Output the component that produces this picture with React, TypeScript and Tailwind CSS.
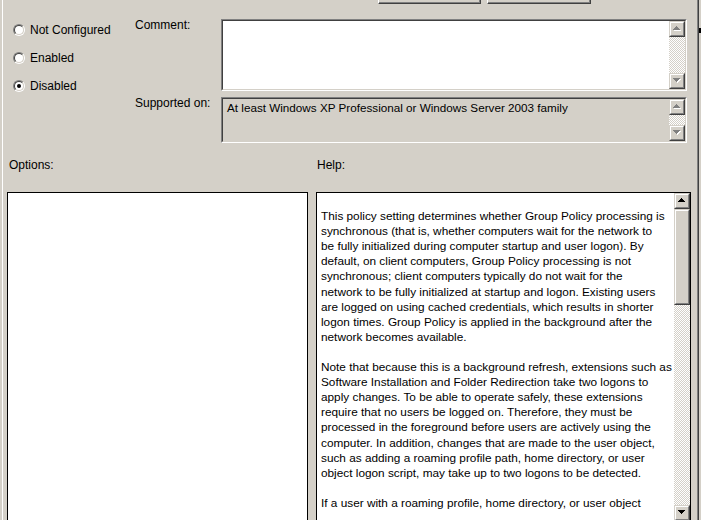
import React from "react";

const Arrow = ({ dir, disabled }: { dir: "up" | "down"; disabled?: boolean }) => {
  const rows = dir === "up" ? [0, 1, 2, 3] : [3, 2, 1, 0];
  const rects = (dx: number, dy: number, fill: string) =>
    rows.map((w, i) => (
      <rect key={fill + i} x={3 - w + dx} y={i + dy} width={2 * w + 1} height={1} fill={fill} />
    ));
  return (
    <svg width="9" height="6" viewBox="0 0 9 6" shapeRendering="crispEdges">
      {disabled ? (
        <>
          {rects(1, 1, "#ffffff")}
          {rects(0, 0, "#808080")}
        </>
      ) : (
        rects(0, 0, "#000000")
      )}
    </svg>
  );
};

const Raised = ({ className = "", children }: { className?: string; children?: React.ReactNode }) => (
  <div className={`shrink-0 border border-t-[#d4d0c8] border-l-[#d4d0c8] border-r-[#404040] border-b-[#404040] ${className}`}>
    <div className="w-full h-full border border-t-white border-l-white border-r-[#808080] border-b-[#808080] bg-[#d4d0c8] flex items-center justify-center">
      {children}
    </div>
  </div>
);

const Track = ({ className = "" }: { className?: string }) => (
  <div
    className={`bg-[image:repeating-conic-gradient(#ffffff_0%_25%,#d4d0c8_0%_50%)] bg-size-[2px_2px] ${className}`}
  />
);

const Sunken = ({ className = "", inner = "", children }: { className?: string; inner?: string; children?: React.ReactNode }) => (
  <div className={`shrink-0 border border-t-[#808080] border-l-[#808080] border-r-white border-b-white ${className}`}>
    <div className={`w-full h-full border border-t-[#404040] border-l-[#404040] border-r-[#d4d0c8] border-b-[#d4d0c8] flex ${inner}`}>
      {children}
    </div>
  </div>
);

const Radio = ({ checked, label }: { checked?: boolean; label: string }) => (
  <div className="flex items-center h-[14px] shrink-0">
    <span className="w-[12px] h-[12px] rounded-full border border-t-[#808080] border-l-[#808080] border-r-white border-b-white">
      <span className="w-full h-full rounded-full border border-t-[#404040] border-l-[#404040] border-r-[#d4d0c8] border-b-[#d4d0c8] bg-white flex items-center justify-center">
        {checked && <span className="w-[4px] h-[4px] rounded-full bg-black" />}
      </span>
    </span>
    <span className="ml-[5px] whitespace-nowrap">{label}</span>
  </div>
);

const helpLines = [
  "",
  "This policy setting determines whether Group Policy processing is",
  "synchronous (that is, whether computers wait for the network to",
  "be fully initialized during computer startup and user logon). By",
  "default, on client computers, Group Policy processing is not",
  "synchronous; client computers typically do not wait for the",
  "network to be fully initialized at startup and logon. Existing users",
  "are logged on using cached credentials, which results in shorter",
  "logon times. Group Policy is applied in the background after the",
  "network becomes available.",
  "",
  "Note that because this is a background refresh, extensions such as",
  "Software Installation and Folder Redirection take two logons to",
  "apply changes. To be able to operate safely, these extensions",
  "require that no users be logged on. Therefore, they must be",
  "processed in the foreground before users are actively using the",
  "computer. In addition, changes that are made to the user object,",
  "such as adding a roaming profile path, home directory, or user",
  "object logon script, may take up to two logons to be detected.",
  "",
  "If a user with a roaming profile, home directory, or user object",
];

export default function App() {
  return (
    <div
      className="w-[701px] h-[520px] overflow-hidden bg-[#d4d0c8] flex text-[12px] leading-[14px] text-black"
      style={{ fontFamily: '"Liberation Sans", Arial, sans-serif' }}
    >
      <div className="w-[2px] shrink-0" />
      <div className="w-px shrink-0 bg-white" />
      <div className="w-[694px] shrink-0 flex flex-col">
        {/* top buttons (clipped) */}
        <div className="h-[4px] shrink-0 flex items-end overflow-hidden">
          <div className="ml-[375px] w-[103px] h-[23px] shrink-0 border-r border-b border-[#404040] border-l border-l-white">
            <div className="w-full h-full border-b border-r border-[#808080]" />
          </div>
          <div className="ml-[6px] w-[104px] h-[23px] shrink-0 border-r border-b border-[#404040] border-l border-l-white">
            <div className="w-full h-full border-b border-r border-[#808080]" />
          </div>
        </div>

        <div className="flex shrink-0">
          <div className="w-[132px] shrink-0 pl-[10px] pt-[19px] flex flex-col gap-[14px]">
            <Radio label="Not Configured" />
            <Radio label="Enabled" />
            <Radio checked label="Disabled" />
          </div>
          <div className="w-[86px] shrink-0 flex flex-col">
            <div className="mt-[14px]">Comment:</div>
            <div className="mt-[64px]">Supported on:</div>
          </div>
          <div className="w-[466px] shrink-0 flex flex-col">
            <Sunken className="mt-[15px] h-[72px]" inner="bg-white">
              <div className="flex-1" />
              <div className="w-[16px] flex flex-col">
                <Raised className="h-[16px]">
                  <Arrow dir="up" disabled />
                </Raised>
                <Track className="flex-1" />
                <Raised className="h-[16px]">
                  <Arrow dir="down" disabled />
                </Raised>
              </div>
            </Sunken>
            <Sunken className="mt-[6px] h-[46px]" inner="bg-[#d4d0c8]">
              <div className="flex-1 pl-[4px] pt-[2px] whitespace-nowrap text-[11.7px]">
                At least Windows XP Professional or Windows Server 2003 family
              </div>
              <div className="w-[16px] flex flex-col">
                <Raised className="h-[16px]">
                  <Arrow dir="up" disabled />
                </Raised>
                <Track className="flex-1" />
                <Raised className="h-[16px]">
                  <Arrow dir="down" disabled />
                </Raised>
              </div>
            </Sunken>
          </div>
        </div>

        <div className="flex shrink-0 mt-[15px]">
          <div className="w-[313px] shrink-0 pl-[6px]">Options:</div>
          <div className="pl-[1px]">Help:</div>
        </div>

        <div className="flex shrink-0 mt-[20px]">
          <div className="ml-[4px] w-[301px] h-[330px] shrink-0 border border-black bg-white" />
          <div className="ml-[8px] w-[375px] h-[330px] shrink-0 border border-black bg-white flex">
            <div className="flex-1 pl-[4px] pt-[1px] leading-[15.1px] text-[11.8px] overflow-hidden">
              {helpLines.map((l, i) => (
                <div key={i} className="h-[15.1px] whitespace-nowrap">
                  {l}
                </div>
              ))}
            </div>
            <div className="w-[16px] flex flex-col bg-[#d4d0c8]">
              <Raised className="h-[16px]">
                <Arrow dir="up" />
              </Raised>
              <Raised className="h-[96px]" />
              <Track className="flex-1" />
              <Raised className="h-[16px]">
                <Arrow dir="down" />
              </Raised>
            </div>
          </div>
        </div>
      </div>
      <div className="w-px shrink-0 bg-[#808080]" />
      <div className="w-px shrink-0 bg-[#404040]" />
      <div className="flex-1 bg-[#d4d0c8] flex flex-col">
        <div className="h-[28px] shrink-0" />
        <div className="h-[5px] w-[2px] shrink-0 bg-black" />
      </div>
    </div>
  );
}
